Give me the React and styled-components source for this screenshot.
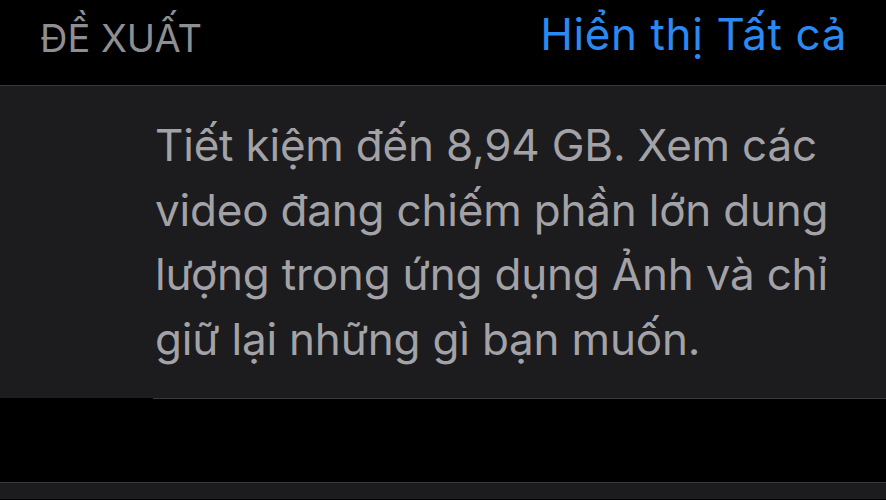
import React from 'react';
import styled, { createGlobalStyle } from 'styled-components';

const GlobalStyle = createGlobalStyle`
  html, body {
    margin: 0;
    padding: 0;
    background: #000000;
  }
  body {
    font-family: Inter, "Noto Sans", sans-serif;
    -webkit-font-smoothing: antialiased;
  }
`;

const Page = styled.div`
  width: 886px;
  height: 500px;
  overflow: hidden;
  background: #000000;
  display: flex;
  flex-direction: column;
`;

const Header = styled.div`
  height: 86px;
  display: flex;
  align-items: flex-start;
  justify-content: space-between;
  padding: 0 39px 0 40px;
  box-sizing: border-box;
  border-bottom: 1px solid #38383a;
`;

const SectionTitle = styled.span`
  font-size: 38px;
  letter-spacing: 0;
  color: #8e8e93;
  line-height: 1;
  margin-top: 19px;
`;

const ShowAll = styled.span`
  font-size: 44px;
  letter-spacing: 0.6px;
  color: #2a8af2;
  line-height: 1;
  margin-top: 12px;
`;

const Card = styled.div`
  background: #1c1c1e;
  height: ${(props) => props.height}px;
  flex-shrink: 0;
  box-sizing: border-box;
  padding: ${(props) => props.padding || '0'};
`;

const Body = styled.p`
  margin: 0;
  font-size: 44px;
  line-height: 64.5px;
  letter-spacing: -0.2px;
  color: #a2a2a7;
  white-space: nowrap;
`;

const Separator = styled.div`
  height: 1px;
  margin-left: ${(props) => props.inset || 0}px;
  background: #3a3a3c;
  flex-shrink: 0;
`;

const Gap = styled.div`
  height: 83px;
  flex-shrink: 0;
  background: #000000;
`;

export default function App() {
  return (
    <Page>
      <GlobalStyle />
      <Header>
        <SectionTitle>ĐỀ XUẤT</SectionTitle>
        <ShowAll>Hiển thị Tất cả</ShowAll>
      </Header>
      <Card height={312} padding="27px 0 0 155px">
        <Body>
          Tiết kiệm đến 8,94 GB. Xem các<br />
          video đang chiếm phần lớn dung<br />
          lượng trong ứng dụng Ảnh và chỉ<br />
          giữ lại những gì bạn muốn.
        </Body>
      </Card>
      <Separator inset={153} />
      <Gap />
      <Separator />
      <Card height={16} />
    </Page>
  );
}
